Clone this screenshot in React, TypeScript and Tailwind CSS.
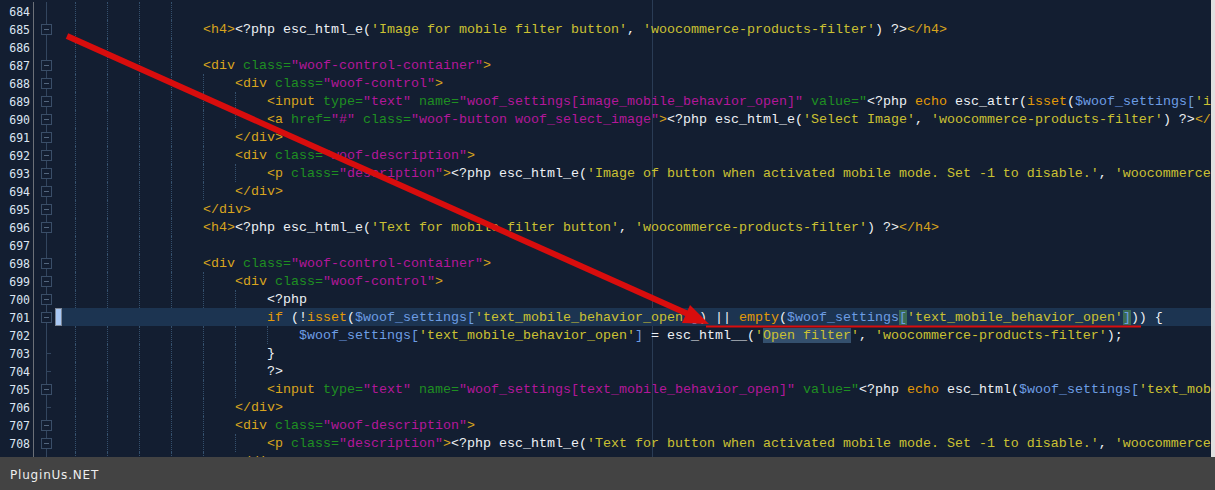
const C = {
  t: "text-[#d8a41e]",
  a: "text-[#1f8f22]",
  v: "text-[#b3179a]",
  p: "text-[#eef1f5]",
  s: "text-[#cbc133]",
  k: "text-[#e39a08]",
  d: "text-[#6d9de4]",
};

type Kind = keyof typeof C;
type Tok = [Kind, string, string?];

type Row = {
  n: number;
  indent: number;
  mark?: "box" | "tick";
  hl?: boolean;
  toks: Tok[];
};

const WPF = "'woocommerce-products-filter'";

const divOpen = (cls: string): Tok[] => [
  ["t", "<div"],
  ["a", " class="],
  ["v", `"${cls}"`],
  ["t", ">"],
];

const rows: Row[] = [
  { n: 684, indent: 16, toks: [] },
  {
    n: 685,
    indent: 16,
    mark: "box",
    toks: [
      ["t", "<h4>"],
      ["p", "<?php esc_html_e("],
      ["s", "'Image for mobile filter button'"],
      ["p", ", "],
      ["s", WPF],
      ["p", ") ?>"],
      ["t", "</h4>"],
    ],
  },
  { n: 686, indent: 16, toks: [] },
  { n: 687, indent: 16, mark: "box", toks: divOpen("woof-control-container") },
  { n: 688, indent: 20, mark: "box", toks: divOpen("woof-control") },
  {
    n: 689,
    indent: 24,
    mark: "box",
    toks: [
      ["t", "<input"],
      ["a", " type="],
      ["v", '"text"'],
      ["a", " name="],
      ["v", '"woof_settings[image_mobile_behavior_open]"'],
      ["a", ' value="'],
      ["p", "<?php "],
      ["k", "echo"],
      ["p", " esc_attr("],
      ["k", "isset"],
      ["p", "("],
      ["d", "$woof_settings["],
      ["s", "'image_mobile_behavior_open'"],
      ["d", "]"],
      ["p", ") ? "],
    ],
  },
  {
    n: 690,
    indent: 24,
    mark: "box",
    toks: [
      ["t", "<a"],
      ["a", " href="],
      ["v", '"#"'],
      ["a", " class="],
      ["v", '"woof-button woof_select_image"'],
      ["t", ">"],
      ["p", "<?php esc_html_e("],
      ["s", "'Select Image'"],
      ["p", ", "],
      ["s", WPF],
      ["p", ") ?>"],
      ["t", "</a>"],
    ],
  },
  { n: 691, indent: 20, mark: "box", toks: [["t", "</div>"]] },
  { n: 692, indent: 20, mark: "box", toks: divOpen("woof-description") },
  {
    n: 693,
    indent: 24,
    mark: "box",
    toks: [
      ["t", "<p"],
      ["a", " class="],
      ["v", '"description"'],
      ["t", ">"],
      ["p", "<?php esc_html_e("],
      ["s", "'Image of button when activated mobile mode. Set -1 to disable.'"],
      ["p", ", "],
      ["s", WPF],
      ["p", ") ?>"],
    ],
  },
  { n: 694, indent: 20, mark: "box", toks: [["t", "</div>"]] },
  { n: 695, indent: 16, mark: "box", toks: [["t", "</div>"]] },
  {
    n: 696,
    indent: 16,
    mark: "box",
    toks: [
      ["t", "<h4>"],
      ["p", "<?php esc_html_e("],
      ["s", "'Text for mobile filter button'"],
      ["p", ", "],
      ["s", WPF],
      ["p", ") ?>"],
      ["t", "</h4>"],
    ],
  },
  { n: 697, indent: 16, toks: [] },
  { n: 698, indent: 16, mark: "box", toks: divOpen("woof-control-container") },
  { n: 699, indent: 20, mark: "box", toks: divOpen("woof-control") },
  { n: 700, indent: 24, mark: "box", toks: [["p", "<?php"]] },
  {
    n: 701,
    indent: 24,
    mark: "box",
    hl: true,
    toks: [
      ["k", "if"],
      ["p", " (!"],
      ["k", "isset"],
      ["p", "("],
      ["d", "$woof_settings["],
      ["s", "'text_mobile_behavior_open'"],
      ["d", "]"],
      ["p", ") || "],
      ["k", "empty"],
      ["p", "("],
      ["d", "$woof_settings"],
      ["d", "[", "bg-[#3b6b55]"],
      ["s", "'text_mobile_behavior_open'"],
      ["d", "]", "bg-[#3b6b55]"],
      ["p", ")) {"],
    ],
  },
  {
    n: 702,
    indent: 28,
    toks: [
      ["d", "$woof_settings["],
      ["s", "'text_mobile_behavior_open'"],
      ["d", "]"],
      ["p", " = esc_html__("],
      ["s", "'"],
      ["s", "Open filter", "bg-[#34506e]"],
      ["s", "'"],
      ["p", ", "],
      ["s", WPF],
      ["p", ");"],
    ],
  },
  { n: 703, indent: 24, mark: "tick", toks: [["p", "}"]] },
  { n: 704, indent: 24, mark: "tick", toks: [["p", "?>"]] },
  {
    n: 705,
    indent: 24,
    mark: "box",
    toks: [
      ["t", "<input"],
      ["a", " type="],
      ["v", '"text"'],
      ["a", " name="],
      ["v", '"woof_settings[text_mobile_behavior_open]"'],
      ["a", ' value="'],
      ["p", "<?php "],
      ["k", "echo"],
      ["p", " esc_html("],
      ["d", "$woof_settings["],
      ["s", "'text_mobile_behavior_open'"],
      ["d", "]"],
      ["p", ") ?>"],
    ],
  },
  { n: 706, indent: 20, mark: "tick", toks: [["t", "</div>"]] },
  { n: 707, indent: 20, mark: "box", toks: divOpen("woof-description") },
  {
    n: 708,
    indent: 24,
    mark: "box",
    toks: [
      ["t", "<p"],
      ["a", " class="],
      ["v", '"description"'],
      ["t", ">"],
      ["p", "<?php esc_html_e("],
      ["s", "'Text for button when activated mobile mode. Set -1 to disable.'"],
      ["p", ", "],
      ["s", WPF],
      ["p", ") ?>"],
    ],
  },
  { n: 709, indent: 20, toks: [["t", "</div>"]] },
];

const FoldMark = ({ mark }: { mark?: "box" | "tick" }) => (
  <svg width="21" height="18" className="shrink-0 block">
    <line x1="12.5" y1="0" x2="12.5" y2="18" stroke="#33465f" />
    {mark === "box" && (
      <>
        <rect x="7.5" y="4.5" width="10" height="10" fill="#131e31" stroke="#3a4e68" />
        <line x1="10" y1="9.5" x2="15" y2="9.5" stroke="#53667e" />
      </>
    )}
    {mark === "tick" && <line x1="12.5" y1="9.5" x2="17" y2="9.5" stroke="#33465f" />}
  </svg>
);

const CodeRow = ({ row }: { row: Row }) => (
  <div className="relative flex h-[18px]">
    <div className="w-[34px] shrink-0 border-r border-[#6b7078] pr-[3px] pt-[1px] text-right font-['DejaVu_Sans_Mono',monospace] text-[11.5px] leading-[18px] text-[#dce6f3]">
      {row.n}
    </div>
    <FoldMark mark={row.mark} />
    <div className="w-[7px] shrink-0">
      {row.hl && <div className="h-[18px] w-[7px] border border-[#7d8796] bg-[#a9c8f4]" />}
    </div>
    <div
      className={`flex flex-1 min-w-0 pl-[13px] whitespace-pre font-['Liberation_Mono',monospace] text-[13.33px] leading-[17px] ${
        row.hl ? "bg-[#1c3451]" : ""
      }`}
    >
      {Array.from({ length: row.indent / 4 }).map((_, i) => (
        <span
          key={i}
          className={`h-[18px] w-[32px] shrink-0 ${
            row.hl ? "" : "border-l border-dotted border-[#34506d]"
          }`}
        />
      ))}
      <span className="block pt-[1px]">
        {row.toks.map(([kind, text, bg], i) => (
          <span key={i} className={`${C[kind]} ${bg ?? ""}`}>
            {text}
          </span>
        ))}
      </span>
    </div>
  </div>
);

const App = () => {
  return (
    <div className="relative flex h-[490px] w-[1215px] flex-col overflow-hidden bg-[#131e31]">
      <div className="flex min-h-0 flex-1">
        <div className="relative min-w-0 flex-1 overflow-hidden pt-[2px]">
          <div className="absolute bottom-0 left-[652px] top-0 w-px bg-[#2a3c55]" />
          {rows.map((row) => (
            <CodeRow key={row.n} row={row} />
          ))}
        </div>
        <div className="w-[4px] shrink-0 bg-[#e0e0e0]" />
      </div>

      <div className="flex h-[33px] shrink-0 items-center bg-[#434343] pl-[10px] pt-[2px] font-['DejaVu_Sans',sans-serif] text-[12px] tracking-[0.8px] text-[#eeeeee]">
        PluginUs.NET
      </div>

      <svg
        className="pointer-events-none absolute left-0 top-0"
        width="1215"
        height="490"
        viewBox="0 0 1215 490"
      >
        <line x1="67" y1="36" x2="688" y2="314" stroke="#d80d0d" strokeWidth="6" />
        <polygon points="709,324 682,323 690,305" fill="#d80d0d" />
        <line x1="706" y1="326.5" x2="1141" y2="326.5" stroke="#d80d0d" strokeWidth="2" />
      </svg>
    </div>
  );
};

export default App;
